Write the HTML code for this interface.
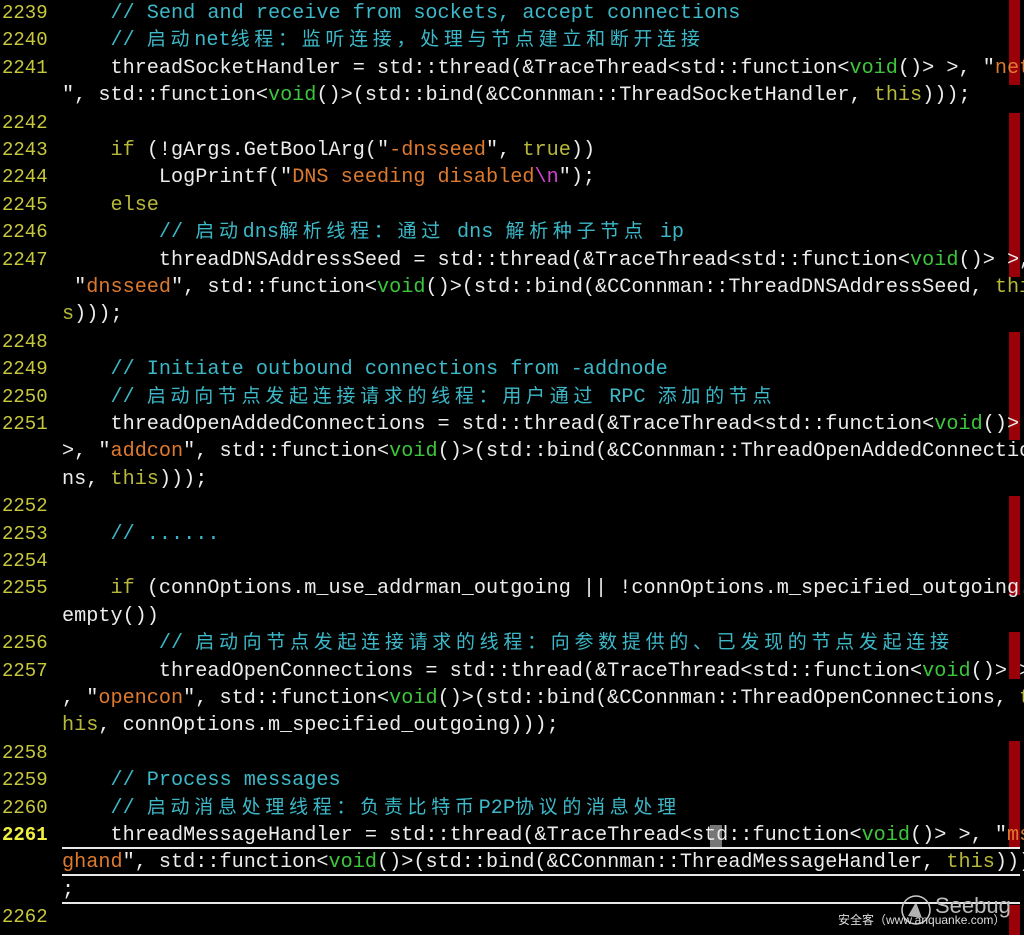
<!DOCTYPE html>
<html><head><meta charset="utf-8">
<style>
html,body{margin:0;padding:0;background:#000;width:1024px;height:935px;overflow:hidden}
.wrap{position:relative;width:1024px;height:935px;font-family:"Liberation Mono","Noto Sans CJK SC",monospace;font-size:20.2px;color:#ececec}
.row{position:absolute;left:0;height:27.4px;line-height:27.4px;white-space:pre;width:1024px}
.n{position:absolute;left:2px;color:#c8c83c;font-size:19px}
.t{position:absolute;left:62px}
.c{color:#3cb8c8}
.s{color:#de7a2e}
.k{color:#b8b83a}
.v{color:#3cc63c}
.m{color:#d040d0}
.z{letter-spacing:4.7px;font-family:"Noto Sans CJK SC",sans-serif;font-size:19px;line-height:0}
.red{position:absolute;left:1009px;width:11px;background:#9a0008}
.ul{position:absolute;height:2px;background:#e8e8e8}
</style></head><body><div class="wrap">

<div class="red" style="top:0;height:85px"></div>
<div class="red" style="top:113px;height:164px"></div>
<div class="red" style="top:332px;height:108px"></div>
<div class="red" style="top:496px;height:99px"></div>
<div class="red" style="top:632px;height:47px"></div>
<div class="red" style="top:741px;height:107px"></div>
<div class="red" style="top:905px;height:30px"></div>

<div class="row" style="top:0px"><span class="n">2239</span><span class="t c">    // Send and receive from sockets, accept connections</span></div>
<div class="row" style="top:27.4px"><span class="n">2240</span><span class="t c">    // <span class="z">启动</span>net<span class="z">线程：监听连接，处理与节点建立和断开连接</span></span></div>
<div class="row" style="top:54.8px"><span class="n">2241</span><span class="t">    threadSocketHandler = std::thread(&amp;TraceThread&lt;std::function&lt;<span class="v">void</span>()&gt; &gt;, "<span class="s">net</span></span></div>
<div class="row" style="top:82.2px"><span class="t">", std::function&lt;<span class="v">void</span>()&gt;(std::bind(&amp;CConnman::ThreadSocketHandler, <span class="k">this</span>)));</span></div>
<div class="row" style="top:109.6px"><span class="n">2242</span></div>
<div class="row" style="top:137px"><span class="n">2243</span><span class="t">    <span class="k">if</span> (!gArgs.GetBoolArg("<span class="s">-dnsseed</span>", <span class="k">true</span>))</span></div>
<div class="row" style="top:164.4px"><span class="n">2244</span><span class="t">        LogPrintf("<span class="s">DNS seeding disabled</span><span class="m">\n</span>");</span></div>
<div class="row" style="top:191.8px"><span class="n">2245</span><span class="t">    <span class="k">else</span></span></div>
<div class="row" style="top:219.2px"><span class="n">2246</span><span class="t c">        // <span class="z">启动</span>dns<span class="z">解析线程：通过</span> dns <span class="z">解析种子节点</span> ip</span></div>
<div class="row" style="top:246.6px"><span class="n">2247</span><span class="t">        threadDNSAddressSeed = std::thread(&amp;TraceThread&lt;std::function&lt;<span class="v">void</span>()&gt; &gt;,</span></div>
<div class="row" style="top:274px"><span class="t"> "<span class="s">dnsseed</span>", std::function&lt;<span class="v">void</span>()&gt;(std::bind(&amp;CConnman::ThreadDNSAddressSeed, <span class="k">thi</span></span></div>
<div class="row" style="top:301.4px"><span class="t"><span class="k">s</span>)));</span></div>
<div class="row" style="top:328.8px"><span class="n">2248</span></div>
<div class="row" style="top:356.2px"><span class="n">2249</span><span class="t c">    // Initiate outbound connections from -addnode</span></div>
<div class="row" style="top:383.6px"><span class="n">2250</span><span class="t c">    // <span class="z">启动向节点发起连接请求的线程：用户通过</span> RPC <span class="z">添加的节点</span></span></div>
<div class="row" style="top:411px"><span class="n">2251</span><span class="t">    threadOpenAddedConnections = std::thread(&amp;TraceThread&lt;std::function&lt;<span class="v">void</span>()&gt;</span></div>
<div class="row" style="top:438.4px"><span class="t">&gt;, "<span class="s">addcon</span>", std::function&lt;<span class="v">void</span>()&gt;(std::bind(&amp;CConnman::ThreadOpenAddedConnectio</span></div>
<div class="row" style="top:465.8px"><span class="t">ns, <span class="k">this</span>)));</span></div>
<div class="row" style="top:493.2px"><span class="n">2252</span></div>
<div class="row" style="top:520.6px"><span class="n">2253</span><span class="t c">    // ......</span></div>
<div class="row" style="top:548px"><span class="n">2254</span></div>
<div class="row" style="top:575.4px"><span class="n">2255</span><span class="t">    <span class="k">if</span> (connOptions.m_use_addrman_outgoing || !connOptions.m_specified_outgoing.</span></div>
<div class="row" style="top:602.8px"><span class="t">empty())</span></div>
<div class="row" style="top:630.2px"><span class="n">2256</span><span class="t c">        // <span class="z">启动向节点发起连接请求的线程：向参数提供的、已发现的节点发起连接</span></span></div>
<div class="row" style="top:657.6px"><span class="n">2257</span><span class="t">        threadOpenConnections = std::thread(&amp;TraceThread&lt;std::function&lt;<span class="v">void</span>()&gt; &gt;</span></div>
<div class="row" style="top:685px"><span class="t">, "<span class="s">opencon</span>", std::function&lt;<span class="v">void</span>()&gt;(std::bind(&amp;CConnman::ThreadOpenConnections, <span class="k">t</span></span></div>
<div class="row" style="top:712.4px"><span class="t"><span class="k">his</span>, connOptions.m_specified_outgoing)));</span></div>
<div class="row" style="top:739.8px"><span class="n">2258</span></div>
<div class="row" style="top:767.2px"><span class="n">2259</span><span class="t c">    // Process messages</span></div>
<div class="row" style="top:794.6px"><span class="n">2260</span><span class="t c">    // <span class="z">启动消息处理线程：负责比特币</span>P2P<span class="z">协议的消息处理</span></span></div>
<div style="position:absolute;left:710px;top:825px;width:12px;height:24px;background:#777"></div>
<div class="row" style="top:822px"><span class="n" style="color:#f0f040;font-weight:bold">2261</span><span class="t">    threadMessageHandler = std::thread(&amp;TraceThread&lt;std::function&lt;<span class="v">void</span>()&gt; &gt;, "<span class="s">ms</span></span></div>
<div class="row" style="top:849.4px"><span class="t"><span class="s">ghand</span>", std::function&lt;<span class="v">void</span>()&gt;(std::bind(&amp;CConnman::ThreadMessageHandler, <span class="k">this</span>)))</span></div>
<div class="row" style="top:876.8px"><span class="t">;</span></div>
<div class="ul" style="left:62px;top:847px;width:958px"></div>
<div class="ul" style="left:62px;top:874px;width:958px"></div>
<div class="ul" style="left:62px;top:902px;width:958px"></div>
<div class="row" style="top:904.2px"><span class="n">2262</span></div>

<svg style="position:absolute;left:898px;top:892px" width="36" height="36" viewBox="0 0 36 36"><circle cx="18" cy="18" r="14" fill="none" stroke="#ccc" stroke-width="1.5"/><path d="M10 24 L18 10 L24 26 Z" fill="#ddd" opacity="0.8"/></svg>
<div style="position:absolute;left:935px;top:893px;font-family:'Liberation Sans',sans-serif;font-size:22px;color:#bbb">Seebug</div>
<div style="position:absolute;left:838px;top:911px;font-family:'Liberation Sans','Noto Sans CJK SC',sans-serif;font-size:12px;color:#ddd">安全客（www.anquanke.com）</div>
</div></body></html>
